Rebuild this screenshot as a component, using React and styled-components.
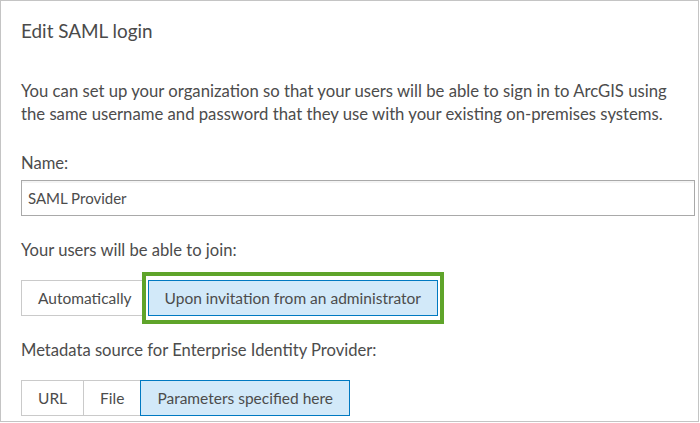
import React from 'react'
import styled, { createGlobalStyle } from 'styled-components'

const GlobalStyle = createGlobalStyle`
    body {
        margin: 0;
        background: #ffffff;
        font-family: "Lato", "Liberation Sans", sans-serif;
        color: #4c4c4c;
    }
`;

const Frame = styled.div`
    box-sizing: border-box;
    width: 699px;
    height: 422px;
    border: 1px solid #c4c4c4;
    padding: 18px 3px 0 20px;
    overflow: hidden;
    background: #ffffff;
`;

const Title = styled.h2`
    margin: 0;
    font-size: 18.9px;
    line-height: 24px;
    font-weight: 400;
    color: #4a4a4a;
`;

const Intro = styled.p`
    margin: 37px 0 0;
    font-size: 16.7px;
    line-height: 23px;
`;

const Label = styled.div`
    margin-top: ${props => props.gap || 0}px;
    font-size: 16.6px;
    line-height: 23px;
`;

const Input = styled.input`
    box-sizing: border-box;
    display: block;
    width: 100%;
    height: 36px;
    margin-top: 5px;
    padding: 0 6px;
    border: 1px solid #a9a9a9;
    box-shadow: inset 0 2px 0 #f4f4f4;
    font-family: inherit;
    font-size: 15px;
    color: #4c4c4c;
    outline: none;
`;

const Group = styled.div`
    display: flex;
    align-items: center;
    margin-top: ${props => props.gap || 0}px;
`;

const Segment = styled.button`
    box-sizing: border-box;
    height: 36px;
    padding: 0 16px;
    margin-left: -1px;
    border: 1px solid ${props => (props.active ? '#0079c1' : '#cacaca')};
    background: ${props => (props.active ? '#d2e9f9' : '#ffffff')};
    position: relative;
    z-index: ${props => (props.active ? 1 : 0)};
    font-family: inherit;
    font-size: 15.5px;
    color: #4c4c4c;
    white-space: nowrap;
    cursor: pointer;

    &:first-child {
        margin-left: 0;
    }
`;

/* green call-out drawn over the segmented control */
const Highlight = styled.div`
    display: flex;
    position: relative;
    z-index: 2;
    margin-left: -7px;
    padding: 4px 2px;
    border: 4px solid #5fa42a;
    background: #ffffff;
`;

const App = () => {
    return (
        <>
            <GlobalStyle />
            <Frame>
                <Title>Edit SAML login</Title>
                <Intro>
                    You can set up your organization so that your users will be able to sign in to ArcGIS using
                    the same username and password that they use with your existing on-premises systems.
                </Intro>
                <Label gap={26}>Name:</Label>
                <Input defaultValue="SAML Provider" />
                <Label gap={23}>Your users will be able to join:</Label>
                <Group gap={10}>
                    <Segment>Automatically</Segment>
                    <Highlight>
                        <Segment active>Upon invitation from an administrator</Segment>
                    </Highlight>
                </Group>
                <Label gap={15}>Metadata source for Enterprise Identity Provider:</Label>
                <Group gap={18}>
                    <Segment>URL</Segment>
                    <Segment>File</Segment>
                    <Segment active>Parameters specified here</Segment>
                </Group>
            </Frame>
        </>
    )
}

export default App
